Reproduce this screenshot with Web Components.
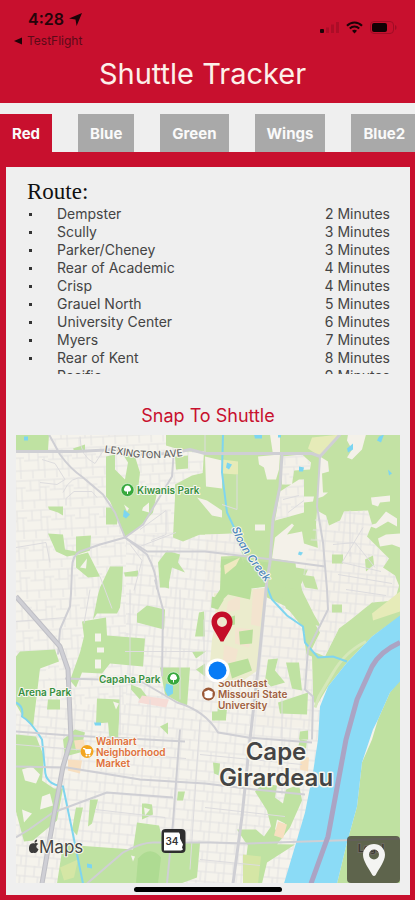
<!DOCTYPE html>
<html lang="en">
<head>
<meta charset="utf-8">
<meta name="viewport" content="width=device-width, initial-scale=1">
<title>Shuttle Tracker</title>
<style>
  :root {
    --red: #c8102e;
    --surface: #efefef;
    --tab: #a9a9a9;
  }

  body {
    margin: 0;
    background: var(--red);
    font-family: Inter, "Liberation Sans", sans-serif;
  }
</style>
</head>
<body>
<shuttle-app></shuttle-app>

<script>
// Phone status bar: clock, back link and indicators
class StatusBar extends HTMLElement {
  constructor() {
    super();
    this.attachShadow({ mode: 'open' });
  }

  connectedCallback() {
    this.shadowRoot.innerHTML = `
      <style>
        :host {
          display: flex;
          justify-content: space-between;
          padding: 10px 18px 0 14px;
          color: #25040a;
        }

        .time {
          display: flex;
          align-items: center;
          gap: 5px;
          padding-left: 14px;
          font-size: 16px;
          line-height: 18px;
          font-weight: 600;
        }

        .back {
          display: flex;
          align-items: center;
          gap: 5px;
          margin-top: 5px;
          font-size: 12px;
          line-height: 15px;
          color: #5c0a18;
          text-decoration: none;
        }

        .icons {
          display: flex;
          align-items: center;
          gap: 7px;
          height: 34px;
        }

        svg {
          display: block;
        }
      </style>

      <div>
        <div class="time">
          <span>4:28</span>
          <svg width="13" height="13" viewBox="0 0 13 13" aria-hidden="true"><path d="M13 0 7.600 13 6.500 6.500 0 5.600z" fill="#1c0307"/></svg>
        </div>
        <a class="back" href="#">
          <svg width="8" height="8" viewBox="0 0 8 8" aria-hidden="true"><path d="M0 4 8 .5v7z" fill="#1c0307"/></svg>
          <span>TestFlight</span>
        </a>
      </div>
      <div class="icons">
        <svg width="19" height="13" viewBox="0 0 19 13" aria-hidden="true">
          <rect y="8" width="4" height="4" rx="1" fill="#1c0307"/>
          <path d="M6 6.500h3V12H6zM11 3.500h3V12h-3zM16 1h3v11h-3z" fill="#ac0d27"/>
        </svg>
        <svg width="17" height="13" viewBox="0 0 17 13" fill="none" stroke="#1c0307" stroke-width="2" aria-hidden="true">
          <path d="M1 4.700C5.200.3 11.800.3 16 4.700M3.800 7.500c2.700-2.700 6.700-2.700 9.400 0"/>
          <path d="M8.500 12.500 6 9.800c1.500-1.300 3.500-1.300 5 0z" fill="#1c0307" stroke="none"/>
        </svg>
        <svg width="27" height="13" viewBox="0 0 27 13" aria-hidden="true">
          <rect x=".5" y=".5" width="23" height="12" rx="3.500" fill="none" stroke="#a00c25"/>
          <rect x="2" y="2" width="15" height="9" rx="2" fill="#120104"/>
          <path d="M25 4c2 .8 2 4.200 0 5z" fill="#a00c25"/>
        </svg>
      </div>
    `;
  }
}

// Row of route tabs; scrolls sideways when it does not fit
class RouteTabs extends HTMLElement {
  constructor() {
    super();
    this.attachShadow({ mode: 'open' });
    this.handleClick = this.handleClick.bind(this);
  }

  connectedCallback() {
    const routes = ['Red', 'Blue', 'Green', 'Wings', 'Blue2'];
    this.shadowRoot.innerHTML = `
      <style>
        :host {
          display: block;
          background: var(--surface);
        }

        nav {
          display: flex;
          gap: 26px;
          padding-top: 11px;
          overflow-x: auto;
          scrollbar-width: none;
        }

        button {
          flex: none;
          border: 0;
          padding: 2px 12px 0;
          height: 38px;
          background: var(--tab);
          color: #fafafa;
          font: 700 15px/20px Inter, "Liberation Sans", sans-serif;
          cursor: pointer;
        }

        button[aria-selected="true"] {
          background: var(--red);
        }
      </style>

      <nav role="tablist" aria-label="Routes">
        ${routes.map((name, i) => `<button role="tab" aria-selected="${i === 0}">${name}</button>`).join('')}
      </nav>
    `;
    this.shadowRoot.querySelector('nav').addEventListener('click', this.handleClick);
  }

  handleClick(event) {
    const tab = event.target.closest('button');
    if (!tab) return;
    this.shadowRoot.querySelectorAll('button').forEach(button => {
      button.setAttribute('aria-selected', button === tab);
    });
  }
}

// Scrolling list of stops with the wait for each
class RouteStops extends HTMLElement {
  constructor() {
    super();
    this.attachShadow({ mode: 'open' });
  }

  connectedCallback() {
    const stops = [
      ['Dempster', 2],
      ['Scully', 3],
      ['Parker/Cheney', 3],
      ['Rear of Academic', 4],
      ['Crisp', 4],
      ['Grauel North', 5],
      ['University Center', 6],
      ['Myers', 7],
      ['Rear of Kent', 8],
      ['Pacific', 9]
    ];
    this.shadowRoot.innerHTML = `
      <style>
        :host {
          display: block;
          height: 195px;
          margin: 0 10px 0 11px;
          overflow-y: auto;
          scrollbar-width: none;
          color: #444;
        }

        h2 {
          margin: 0;
          font: 400 23px/26px "Liberation Serif", serif;
          color: #111;
        }

        ul {
          margin: 0;
          padding: 0;
          list-style: none;
        }

        li {
          display: flex;
          align-items: center;
          font-size: 14px;
          line-height: 18px;
        }

        li::before {
          content: "";
          width: 3px;
          height: 3px;
          margin: 0 25px 0 2px;
          background: #333;
        }

        .wait {
          margin-left: auto;
        }
      </style>

      <h2>Route:</h2>
      <ul>
        ${stops.map(([name, wait]) => `<li><span>${name}</span><span class="wait">${wait} Minutes</span></li>`).join('')}
      </ul>
    `;
  }
}

// Town map; the slot holds controls laid over the corner
class ShuttleMap extends HTMLElement {
  constructor() {
    super();
    this.attachShadow({ mode: 'open' });
  }

  connectedCallback() {
    this.shadowRoot.innerHTML = `
      <style>
        :host {
          display: block;
          position: relative;
          overflow: hidden;
        }

        svg {
          display: block;
          width: 100%;
          height: 100%;
          font-family: Inter, "Liberation Sans", sans-serif;
        }

        .label {
          paint-order: stroke;
          stroke: #f8f7f0;
          stroke-width: 2px;
          stroke-linejoin: round;
          font-size: 10px;
          font-weight: 600;
        }

        .green { fill: #37903f; }
        .brown { fill: #a0603f; }
        .orange { fill: #e0703a; }
        .road { fill: #666; font-weight: 500; }
        .creek { fill: #4a86ba; font-size: 11px; font-style: italic; font-weight: 500; }
        .city { fill: #444; font-size: 24px; text-anchor: middle; stroke-width: 3px; }
        .maps { fill: #444; font-size: 17px; font-weight: 400; }

        ::slotted(*) {
          position: absolute;
          right: 0;
          bottom: 0;
        }
      </style>

      <svg viewBox="16 435 384 449" preserveAspectRatio="xMidYMid slice" role="img" aria-label="Map of Cape Girardeau">
        <defs>
          <pattern id="blocks" width="24" height="30" patternUnits="userSpaceOnUse" patternTransform="rotate(-3)">
            <path d="M0 2h24M0 12h14M14 9h10M0 22h24M5 2v10M14 2v20M20 22v10M8 22v10M20 9v13" fill="none" stroke="#e4e3e2"/>
          </pattern>
          <pattern id="grid" width="18" height="20" patternUnits="userSpaceOnUse" patternTransform="rotate(5)">
            <path d="M0 1h18M0 11h18M2 0v11M11 0v20M6 11v9" fill="none" stroke="#e2e1e1"/>
          </pattern>
          <path id="lexington" d="M104 453Q118 455 130 457Q150 461 186 456"/>
          <path id="sloan" d="M232 529Q240 554 272 590"/>
        </defs>

        <!-- land and street blocks -->
        <path d="M16 435h384v449H16z" fill="#f5f3ec"/>
        <path d="M16 435h200v100h-90v170H16z" fill="url(#blocks)"/>
        <path d="M16 705h110V535h195v205l-10 144H16z" fill="url(#grid)"/>

        <!-- woods in the north east -->
        <path d="M205 435h195v182l-28 20-25 26-19 24-12 20-8-20-1-30-5-30-16-20-19-9-4-30h-50l5-33-19 0z" fill="#c3e2a4"/>
        <path d="M205 435h-39v11l20 6h19zM175 457l13-1v13l-12 1zM192 476l13-3v14l17 4v20l11 14 5 10-38 0-17 7-10-4 2-40v-13z" fill="#c3e2a4"/>
        <g fill="#f4f1e9">
          <path d="M205 457l17 4v28l-16-2zM197 498l10 3 15 10v7l-10-2zM258 457l22-2-1 15-3 10-9 0-3-12-5-3zM270 435h10v20h-7zM282 457l20-2 9 8-1 7-16 1-2 14h-10zM280 492l19-12 5 0v17l10 0-1 5-9 1v10l-29 8zM255 525h10v6h-10zM320 457l8 5 1 10-7 2 1 19 5 0-5 4-6 2z"/>
          <path d="M348 435h18l-4 15-10 10-5-2 5-8-5-9zM371 498l19-2v6l-10 1-2 4-6-2zM275 538l17-14 2 2-7 9 15-3 2 12 19 6 2 17-53-8z"/>
          <path d="M317 511l9 5 3 10 11-5 4-9 24-1 4 14-5 12 22 22-6 9 12 8 4 10-4 15-23 2-21 17-12 9-14 28-14-6 9-18-14-24-5-24 7-15-12-2-2-19 24 2-2-26z"/>
          <path d="M368 526l8-2 10-12 11 7v8l-9-5-12 7zM378 539l8-4 14-1v14l-8-3-12 2zM205 535l28-1 10 22-22 1-2 45h-14zM267 602l15 16 13 7 10 9-1 20 8 3 1 35-1 36-56-1z"/>
        </g>
        <path d="M317 511l9 5 3 10 11-5 4-9 24-1 4 14-5 12 22 22-6 9 12 8 4 10-4 15-23 2-21 17-12 9-14 28-14-6 9-18-14-24-5-24zM267 602l15 16 13 7 10 9-1 20 8 3 1 35-1 36-56-1zM205 535l28-1 10 22-22 1-2 45h-14z" fill="url(#grid)"/>
        <path d="M282 457l20-2 9 8-1 7-16 1-2 14h-10zM280 492l19-12 5 0v33l-29 8z" fill="url(#blocks)"/>
        <path d="M312 438l28-3-20 22-12-8zM222 460l16 2v13l-16-1zM372 614l28-22v20l-27 9z" fill="#e6ebb8"/>
        <path d="M300 575l14 2 4 13-13-2zM332 555h11v9h-11zM365 560l8-4 1 9-8 7zM282 587l20 4 12 24 7 12-12-3-23-15-4-12zM332 605h10v8h-10z" fill="#c3e2a4"/>

        <!-- campus -->
        <path d="M214 594l53-6-8 82-20 14-21-4-8-16 2-24 4-20z" fill="#ebeccd"/>
        <path d="M253 590l12-1-5 38-9-2zM228 602l12-6v14l-14 3zM235 628l18 2-4 18-14-4zM224 645l14 5-3 14-12-2zM213 620l8-3 3 19-9 3z" fill="#f3e4cf"/>
        <path d="M221 560l20-2 12 22-3 20-22-5-7 7h-9l8-12zM243 560l26 3-2 24-15 2zM239 632l14-2-1 14-12 1zM212 597l12 3-6 10-7-2zM228 664l20-5 4 12-20 8zM228 618l7-2v9l-8 2z" fill="#b9df9b"/>
        <path d="M224 566l16-8-4 8-11 9z" fill="#efe9c0"/>

        <!-- parks -->
        <g fill="#bfe2a2">
          <path d="M16 435h33l-1 16H16zM73 449l12-4v6H74zM106 457l9-2v15l10 10 3-17-5-8 12 2 5 16-2 17 19 3-4 20-16 17-12 7-7-17-8-18-4-5zM106 508h13l-2 17h-11zM48 507h15v9l-5-3-9-3z"/>
          <path d="M48 534l15 1 2 15 11 2V537l15-1-1 15-12 4-11 2-11-5zM76 556l12-3 12 24-12 1-12-10zM110 567h13l-1 23-2 18-3 6-20 0-4 6 5-25 2-7zM124 573l14-2v6h-13z"/>
          <path d="M158 563l9-12 13 4-2 8 7 10-13-5-4 20h-8zM160 580h9v9l-8-2z"/>
          <path d="M137 614l10-8 18 4-1 20-27-7zM82 622l24-4 1 18 38 3-2 28-33-3-8 10-20-1-6 15-6-7 10-28 4-16zM20 652l35-2 4 12-19 7-7 58-10-10-7-12v-48zM199 613l5-1 1 25-10 0zM160 668h30l-3 39-22-12zM97 699l23 1-2 40-8 5-2-22-12 1zM131 685l10 4 9 12-10-1-9-10zM48 700l12 0v10H47zM192 652l14 0-10 7zM196 670l9-6v13zM160 727l8-4v12z"/>
          <path d="M16 735l20 2 8 20-2 24 12 8h9l-6 32-24 20-9 1-8-30zM63 740l12-10 10 3-5 20-15 4zM63 845l70 5 4-27 22 3 4 16 37 1-3 35-16 6H57zM76 808l7 0-6 28-5-6zM90 800l8 0-6 24-4 3zM146 804l6 1 1 10-11 5v-16zM178 792l7 0-2 9h-6z"/>
          <path d="M255 792l8-8 14 2-2 12 8 6 3-14 13-5 3 16-12 27-13 17h-30l-10-15h19l8 7 7-10-4-16zM248 844l47 1-28 18-5 21h-19zM213 763l7 1-1 12-5-2zM300 732l8-1v9h-9zM278 703l30-10-1 22-27-1zM286 663l13 0 3 28-10-2zM268 660l10-1-3 12 10 12-14 4-6-6zM212 712l14 0v9h-14zM218 706l9 3-1 10-9-2zM300 740l7 1-1 8-8-1z"/>
        </g>
        <path d="M124 505l5 4-2 3zM143 508l6-5v10l-7-2zM80 568l7-9-1 10zM95 634h6v8h-6zM97 648h7v5h-7zM95 660h6v9h-6zM113 702l6 2-3 6zM46 670l8-2-1 12-7-3zM22 770l10-3 8 8-4 9-11-3zM42 797l8-3 3 12-13 4zM22 810l10 4-8 9zM69 763l8 1v10h-8zM144 808l6 2-5 6zM131 856l4 1-2 5zM277 820l8 4-3 8-7-2z" fill="#f5f3ec"/>
        <path d="M60 868l18-8-4 18-10 3zM243 855l18 2-3 27h-15z" fill="#d5e6a5"/>
        <path d="M138 859q12-14 23-1l-3 26h-22z" fill="#aedb92"/>
        <path d="M142 696l27 4-3 8-28-5z" fill="#f6dcd6"/>
        <path d="M68 760l14 1-2 13-12-3zM74 741l10-1 1 8-9 3zM278 822l9 3-4 14-9-3zM301 757l8 1-1 14-8-2z" fill="#f7dfc0"/>

        <!-- river -->
        <path d="M400 680l-10 13-12 27-6 20-10 23-5 44-10 36-10 41h63z" fill="#bfe1a1"/>
        <path d="M400 616l-28 21-25 26-19 24-8 20-2 33-5 33-8 40-10 34-11 37h53l10-41 10-36 5-44 11-33 5-10 12-27 10-11z" fill="#8bdbf6"/>
        <path d="M366 642q-21 10-34 33l-13 22-4 11" fill="none" stroke="#d5e8b9" stroke-width="3"/>
        <g fill="none" stroke="#7fd5ef" stroke-width="2">
          <path d="M223 435l-1 38 5 40 8 17M266 585l6 15 15 16 16 11 2 16 13 15 15-1 14 5" stroke-width="2"/>
          <path d="M16 703q8 4 6 14 9 5 20 23l3 30q0 15 18 17l9 43 11 54"/>
        </g>
        <path d="M24 437h4v4h-4zM124 510l6 5-4 4-3-2zM254 435h8v4h-7zM278 435h3v3h-3zM227 463l5 2-3 5-3-2zM299 467l5 1-1 4h-4zM347 449l6-5v6l-5 3zM379 437l5-2-3 8-4-2zM388 470l4 4-3 2zM299 552l4 1-2 3-3-1zM166 684l7 2v8l-5 3-3-6zM94 723h7v3h-6zM87 864l5 1v4l-5-1z" fill="#7cd5f1"/>

        <!-- side streets -->
        <g fill="none" stroke="#dddcde">
          <path d="M63 493q8-18 22-14M66 506v-7l8-7h18l5 6M80 437q0 20 15 27l9-14M42 460l13 4 10 16-8 5-17-2M16 548l30-5 4 20M140 530l26-19v24l-15 6M176 533l-36 14M100 577l12 32M130 545l12 16-8 30M283 500l16-4M288 513l16-12M363 528l-21 35 39 9M333 545l22-2 20 25M350 511v46M338 575l54 9M346 590l40 6M205 435v20M237 475v35l-15-5"/>
          <path d="M130 590v95M180 590v110M204 620v60M125 652h70M120 686v50M150 700v60M16 745l170 14M16 622l50-4M90 590l-6 34M282 695v100M200 720l-10 150M205 808l80 9M200 860l60 6"/>
          <path d="M95 810l70 8M200 755l102 10"/>
        </g>

        <!-- main roads -->
        <g fill="none" stroke="#cfcfd4" stroke-width="2" stroke-linejoin="round">
          <path d="M16 452h60l40-2 20 5 35-1 19-4 15 4h107l8 3 20-22" stroke-width="3"/>
          <path d="M49 435l11 20q10 14 23 23l20 17 12 18 10 25 22 17q10 18 10 35M155 580l8 30-1 67"/>
          <path d="M125 538l18-13 17-28 12-20 2-27M125 538l-25 7-20 7q-8 4-8 17l-1 25-1 13-10 23-2 25M125 538l22 14h58l67 8 53 7"/>
          <path d="M282 455l-2 32-7 33-3 43-3 17-9 90-8 70-8 77-9 67" stroke-width="3"/>
          <path d="M320 457l-3 50 6 36 4 47 1 20-20 40-3 40 8 7-1 43"/>
          <path d="M65 679l35 1 43 3 34 20q28 8 41 30l30 5 64 5M16 732l54 4 115 6M16 767l51 1 73 12 65 4 50 6 50 5"/>
          <path d="M16 838l13-8 24-17 54-20 66 5M180 730l-7 93-6 61M87 884l36-31q18-10 30-10h57l38 1 57-2 95-3"/>
          <path d="M16 597l44 50 8 23 3 70-8 27-8 43-13 74" stroke="#bfbfc5" stroke-width="5"/>
          <path d="M16 597l44 50 8 23 3 70-8 27-8 43-13 74" stroke="#cfcfd5" stroke-width="3"/>
        </g>
        <path d="M400 643q-20 9-28 24l-15 33-11 40-8 43-10 54-17 47" fill="none" stroke="#aba4c4" stroke-width="5"/>

        <!-- labels -->
        <text class="label road"><textPath href="#lexington">LEXINGTON AVE</textPath></text>
        <text class="label creek"><textPath href="#sloan">Sloan Creek</textPath></text>
        <text class="label green" x="137" y="494">Kiwanis Park</text>
        <text class="label green" x="99" y="683">Capaha Park</text>
        <text class="label green" x="18" y="696">Arena Park</text>
        <text class="label orange" x="96" y="745">Walmart</text>
        <text class="label orange" x="96" y="756">Neighborhood</text>
        <text class="label orange" x="96" y="767">Market</text>
        <text class="label brown" x="218" y="687">Southeast</text>
        <text class="label brown" x="218" y="698">Missouri State</text>
        <text class="label brown" x="218" y="709">University</text>
        <text class="label city" x="276" y="760">Cape</text>
        <text class="label city" x="276" y="786">Girardeau</text>
        <text class="label maps" x="39" y="853">Maps</text>
        <text class="label" x="358" y="852" fill="#333">Legal</text>

        <!-- apple mark -->
        <path transform="translate(28 840) scale(1.250)" d="M8.300 3.600c-1-.8-2-.9-3-.4-1.100-.5-2.400-.3-3.400.6C.3 5.400.700 9.200 1.500 9.800c.9 1.200 1.700 1.200 2.800.7 1.100.5 2 .5 3-.7.5-.7.9-1.400 1.100-2.100-2.200-1-2.400-3-.1-4.100zM5.200 2.600C5.100 1.200 6 .2 7.300 0c.2 1.400-.8 2.500-2.100 2.600z" fill="#3c3c3c"/>

        <!-- places -->
        <g id="park-icon">
          <circle cx="127.500" cy="490.500" r="6.500" fill="#38a93d" stroke="#fff" stroke-width=".5"/>
          <path d="M127 494.500v-2.500c-2.500.5-4-2-2.500-3.500 0-3.500 6-3.500 6 0 1.500 1.500 0 4-2.500 3.500v2.500z" fill="#fff"/>
        </g>
        <use href="#park-icon" x="46" y="188.500"/>
        <circle cx="87" cy="752" r="6.500" fill="#f3a621"/>
        <path d="M83 749h2l1 5h4l1-4h-5z" fill="#fff" stroke="#fff" stroke-linejoin="round"/>
        <circle cx="86.500" cy="756" r="1" fill="#fff"/>
        <circle cx="89.500" cy="756" r="1" fill="#fff"/>
        <circle cx="208.500" cy="694.500" r="6.500" fill="#9a5836"/>
        <path d="M204 692.500l4.500-2 4.500 2-.5 1v4c-2 1.700-6 1.700-8 0v-4z" fill="#fff"/>

        <!-- route 34 shield -->
        <rect x="161.500" y="829.500" width="24" height="24" rx="4" fill="#2e2e2e"/>
        <path d="M164 833h15l1 2v4l3 6-1 3 1 2-2 1h-17z" fill="#fff"/>
        <text x="172" y="845" font-size="10" font-weight="600" fill="#333" text-anchor="middle">34</text>

        <!-- rider and shuttle -->
        <circle cx="217.500" cy="671" r="12" fill="#fff"/>
        <circle cx="217.500" cy="671" r="9" fill="#087bf5"/>
        <path fill-rule="evenodd" d="M222 612c-6 0-10.500 4.500-10.500 10.500 0 6.500 6 12.500 9 19.500h3c3-7 9-13 9-19.500 0-6-4.500-10.500-10.500-10.500zm0 5.500a5 5 0 1 1 0 10 5 5 0 0 1 0-10z" fill="#c40d28"/>
      </svg>
      <slot></slot>
    `;
  }
}

class LocateButton extends HTMLElement {
  constructor() {
    super();
    this.attachShadow({ mode: 'open' });
  }

  connectedCallback() {
    this.shadowRoot.innerHTML = `
      <style>
        :host {
          display: block;
        }

        button {
          display: grid;
          place-items: center;
          width: 53px;
          height: 47px;
          border: 0;
          padding: 0;
          border-radius: 4px;
          background: rgba(62, 58, 48, 0.75);
          cursor: pointer;
        }
      </style>

      <button aria-label="Show shuttle location">
        <svg width="22" height="32" viewBox="0 0 22 32" aria-hidden="true">
          <path fill-rule="evenodd" d="M11 0C5 0 0 4.700 0 10.800 0 17.500 6 24.500 9.300 31q1.700 2 3.400 0C16 24.500 22 17.500 22 10.800 22 4.700 17 0 11 0zm0 5.500a5 5 0 1 1 0 10 5 5 0 0 1 0-10z" fill="#f4f4f2"/>
        </svg>
      </button>
    `;
  }
}

// Page shell
class ShuttleApp extends HTMLElement {
  constructor() {
    super();
    this.attachShadow({ mode: 'open' });
  }

  connectedCallback() {
    this.shadowRoot.innerHTML = `
      <style>
        :host {
          display: flex;
          flex-direction: column;
          position: relative;
          min-height: 100vh;
          background: var(--red);
        }

        header {
          padding-bottom: 11px;
        }

        h1 {
          margin: 8px 0 0;
          padding-right: 10px;
          font-size: 29px;
          line-height: 36px;
          font-weight: 400;
          text-align: center;
          color: #fdf0ea;
        }

        main {
          flex: 1;
          display: flex;
          flex-direction: column;
          margin: 15px 5px 5px 6px;
          padding: 12px 10px;
          background: var(--surface);
        }

        .snap {
          align-self: center;
          margin: 29px 0 6px;
          border: 0;
          padding: 0;
          background: none;
          color: var(--red);
          font: 400 18px/26px Inter, "Liberation Sans", sans-serif;
          cursor: pointer;
        }

        shuttle-map {
          flex: 1 0 320px;
        }

        .home {
          position: absolute;
          left: 50%;
          bottom: 8px;
          width: 148px;
          height: 5px;
          border-radius: 3px;
          background: #000;
          transform: translateX(-50%);
        }
      </style>

      <header>
        <status-bar></status-bar>
        <h1>Shuttle Tracker</h1>
      </header>
      <route-tabs></route-tabs>
      <main>
        <route-stops></route-stops>
        <button class="snap">Snap To Shuttle</button>
        <shuttle-map>
          <locate-button></locate-button>
        </shuttle-map>
      </main>
      <div class="home"></div>
    `;
  }
}

customElements.define('status-bar', StatusBar);
customElements.define('route-tabs', RouteTabs);
customElements.define('route-stops', RouteStops);
customElements.define('shuttle-map', ShuttleMap);
customElements.define('locate-button', LocateButton);
customElements.define('shuttle-app', ShuttleApp);
</script>
</body>
</html>
